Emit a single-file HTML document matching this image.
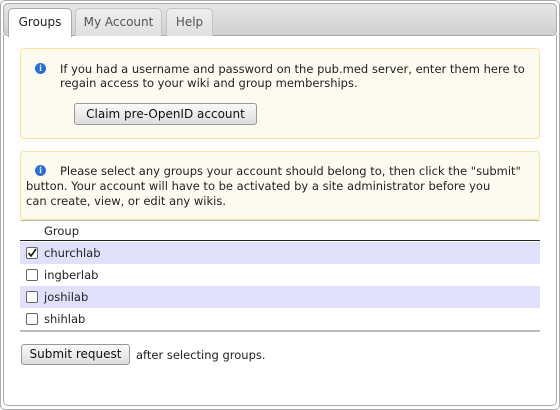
<!DOCTYPE html>
<html><head><style>
*{box-sizing:border-box}
body{margin:0;width:560px;height:410px;font-family:"DejaVu Sans",Verdana,sans-serif;font-size:11.5px;color:#222;background:#fff;position:relative;overflow:hidden}
.outer{position:absolute;left:0;top:0;width:560px;height:410px;border:1px solid #aaa;border-radius:5px;background:#fff}
.bar{position:absolute;left:3px;top:3px;width:554px;height:33px;border:1px solid #aaa;border-radius:5px;background:linear-gradient(#e6e6e6,#d0d0d0)}
.tab{position:absolute;top:8px;height:28px;border:1px solid #c4c4c4;border-bottom:none;border-radius:5px 5px 0 0;background:linear-gradient(#eee,#e0e0e0);color:#555;font-size:12px;line-height:26px;text-align:center}
.tab.act{background:#fff;border-color:#aaa;color:#222;height:29px}
.panel{position:absolute;left:3px;top:35px;width:554px;height:371px;border:1px solid #aaa;border-top:none;border-radius:0 0 5px 5px}
.box{position:absolute;left:20px;width:520px;border:1px solid #f5e49a;border-radius:4px;background:#fdfbf0;line-height:14px;padding:0}
.ic{position:absolute;width:11px;height:11px;border-radius:50%;background:#2a6fd6;color:#fff;font-size:9px;font-weight:bold;line-height:11px;text-align:center;font-family:"Liberation Serif",serif}
.btn{position:absolute;border:1px solid #999;border-radius:3px;background:linear-gradient(#fafafa,#ddd);font-size:12px;text-align:center;color:#111}
.row{position:absolute;left:20px;width:520px;height:22px;line-height:22px}
.cb{position:absolute;left:6px;top:5px;width:12px;height:12px;border:1px solid #666;border-radius:2px;background:#fff}
</style></head><body>
<div class="outer"></div>
<div class="bar"></div>
<div class="tab" style="left:8px;width:64px">Groups</div>
<div class="tab" style="left:75px;width:87px">My Account</div>
<div class="tab" style="left:166px;width:47px">Help</div>
<div class="tab act" style="left:8px;width:64px">Groups</div>
<div class="panel"></div>
<div class="box" style="top:48px;height:91px">
<div class="ic" style="left:14px;top:14px">i</div>
<div style="position:absolute;left:39px;top:13px;white-space:nowrap">If you had a username and password on the pub.med server, enter them here to<br>regain access to your wiki and group memberships.</div>
</div>
<div class="btn" style="left:74px;top:103px;width:183px;height:22px;line-height:20px">Claim pre-OpenID account</div>
<div class="box" style="top:151px;height:69px;line-height:15px">
<div class="ic" style="left:14px;top:13px">i</div>
<div style="position:absolute;left:5px;top:12px;width:512px;white-space:nowrap;padding-left:34px">Please select any groups your account should belong to, then click the "submit"</div>
<div style="position:absolute;left:5px;top:27px;white-space:nowrap">button. Your account will have to be activated by a site administrator before you<br>can create, view, or edit any wikis.</div>
</div>
<div style="position:absolute;left:20px;top:220px;width:520px;height:21px;border-top:1px solid #bbb;border-bottom:1px solid #222"></div>
<div style="position:absolute;left:44px;top:224px">Group</div>
<div class="row" style="top:242px;background:#e0e0fb"><div class="cb"><svg width="10" height="10" style="position:absolute;left:0;top:0"><path d="M1.5 5l2.5 3L9 1" stroke="#111" stroke-width="1.6" fill="none"/></svg></div><span style="margin-left:24px">churchlab</span></div>
<div class="row" style="top:264px"><div class="cb"></div><span style="margin-left:24px">ingberlab</span></div>
<div class="row" style="top:286px;background:#e0e0fb"><div class="cb"></div><span style="margin-left:24px">joshilab</span></div>
<div class="row" style="top:308px"><div class="cb"></div><span style="margin-left:24px">shihlab</span></div>
<div style="position:absolute;left:20px;top:330px;width:520px;border-top:2px solid #bbb"></div>
<div class="btn" style="left:21px;top:344px;width:109px;height:21px;line-height:19px">Submit request</div>
<div style="position:absolute;left:136px;top:348px">after selecting groups.</div>
</body></html>
